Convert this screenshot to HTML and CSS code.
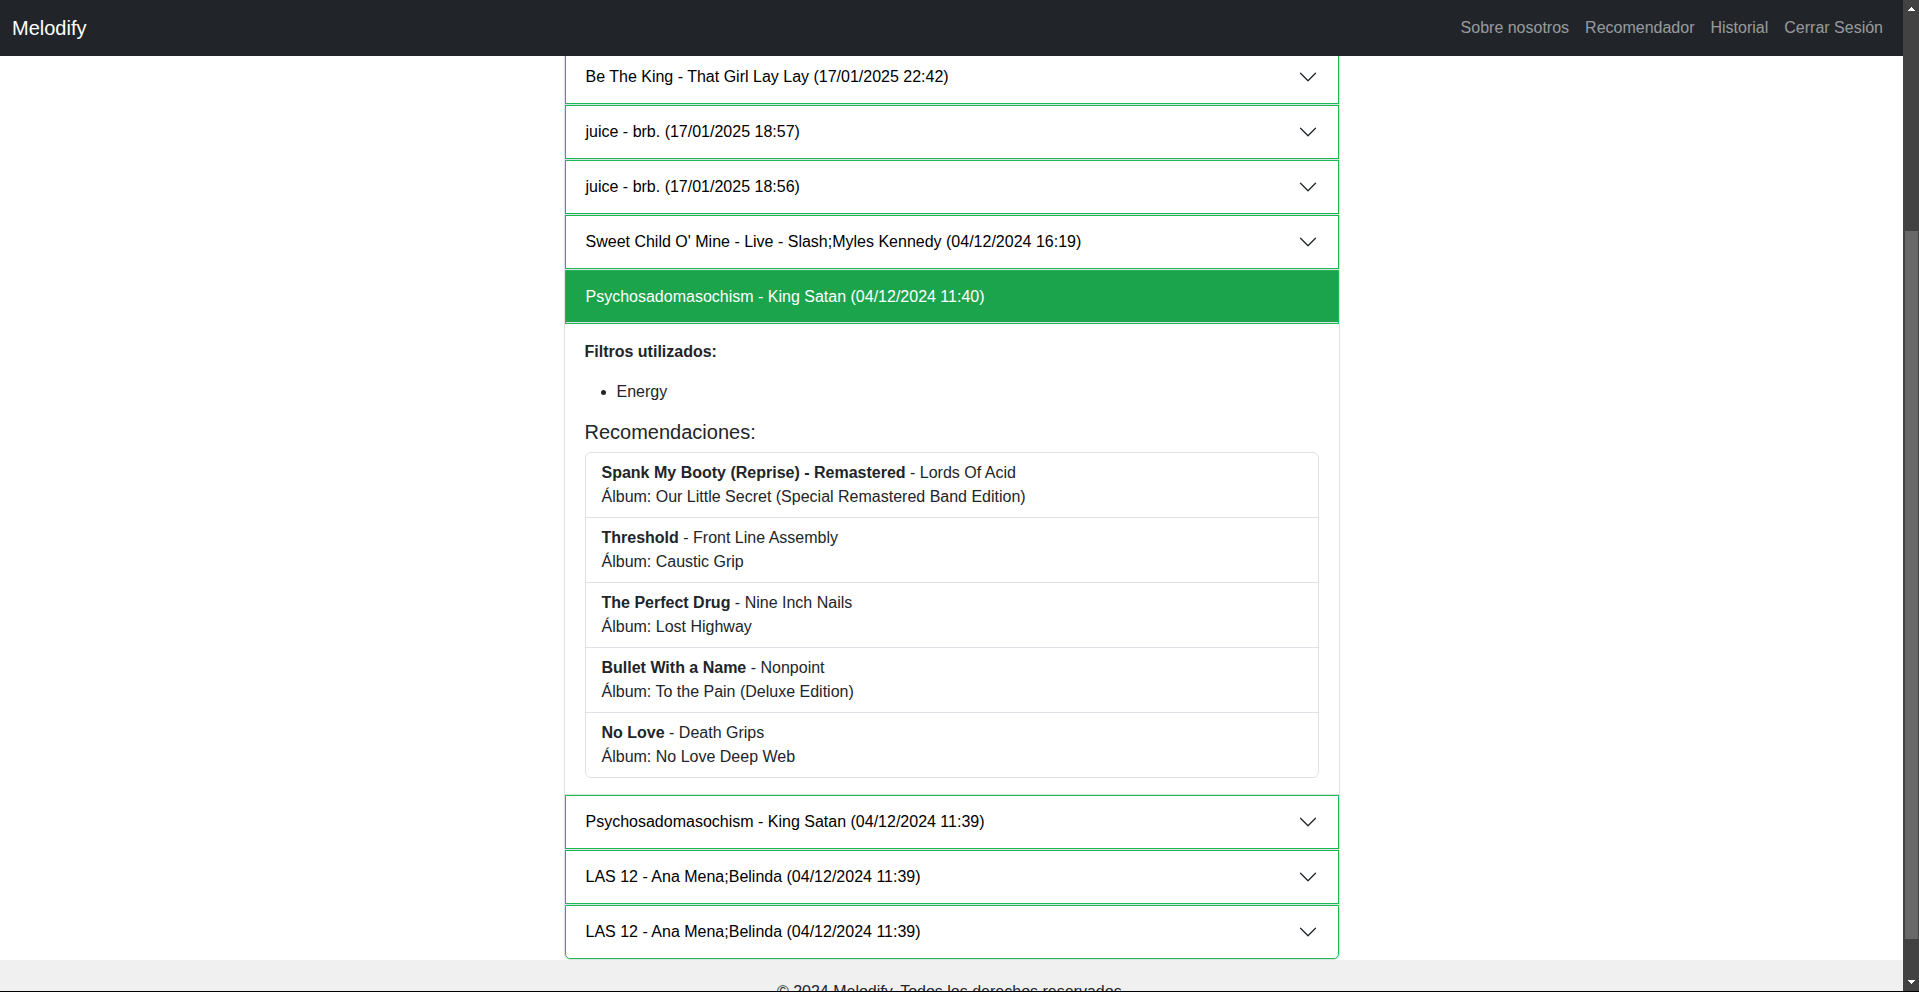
FILE: index.html
```html
<!DOCTYPE html>
<html lang="es">
<head>
<meta charset="utf-8">
<meta name="viewport" content="width=device-width, initial-scale=1">
<title>Melodify - Historial</title>
<link rel="stylesheet" href="styles.css">
</head>
<body>
<svg class="sprite" aria-hidden="true">
  <symbol id="chevron" viewBox="0 0 16 16">
    <path fill="none" stroke="currentColor" stroke-linecap="round" stroke-linejoin="round" d="m2 5 6 6 6-6"/>
  </symbol>
</svg>
<div class="page">
  <nav class="navbar">
    <a class="brand" href="#">Melodify</a>
    <div class="nav-links">
      <a class="nav-link" href="#">Sobre nosotros</a>
      <a class="nav-link" href="#">Recomendador</a>
      <a class="nav-link" href="#">Historial</a>
      <a class="nav-link" href="#">Cerrar Sesión</a>
    </div>
  </nav>
  <main class="container">
    <div class="accordion">
      <section class="item">
        <button class="item-button" type="button" aria-expanded="false"><span>Be The King - That Girl Lay Lay (17/01/2025 22:42)</span><svg class="chevron" aria-hidden="true"><use href="#chevron"/></svg></button>
      </section>
      <section class="item">
        <button class="item-button" type="button" aria-expanded="false"><span>juice - brb. (17/01/2025 18:57)</span><svg class="chevron" aria-hidden="true"><use href="#chevron"/></svg></button>
      </section>
      <section class="item">
        <button class="item-button" type="button" aria-expanded="false"><span>juice - brb. (17/01/2025 18:56)</span><svg class="chevron" aria-hidden="true"><use href="#chevron"/></svg></button>
      </section>
      <section class="item">
        <button class="item-button" type="button" aria-expanded="false"><span>Sweet Child O' Mine - Live - Slash;Myles Kennedy (04/12/2024 16:19)</span><svg class="chevron" aria-hidden="true"><use href="#chevron"/></svg></button>
      </section>
      <section class="item">
        <button class="item-button open" type="button" aria-expanded="true" aria-controls="detail"><span>Psychosadomasochism - King Satan (04/12/2024 11:40)</span></button>
        <div class="item-body" id="detail">
          <p class="filters-title"><strong>Filtros utilizados:</strong></p>
          <ul class="filters">
            <li>Energy</li>
          </ul>
          <h5 class="results-title">Recomendaciones:</h5>
          <ul class="results">
            <li class="result"><strong>Spank My Booty (Reprise) - Remastered</strong> - Lords Of Acid<br>Álbum: Our Little Secret (Special Remastered Band Edition)</li>
            <li class="result"><strong>Threshold</strong> - Front Line Assembly<br>Álbum: Caustic Grip</li>
            <li class="result"><strong>The Perfect Drug</strong> - Nine Inch Nails<br>Álbum: Lost Highway</li>
            <li class="result"><strong>Bullet With a Name</strong> - Nonpoint<br>Álbum: To the Pain (Deluxe Edition)</li>
            <li class="result"><strong>No Love</strong> - Death Grips<br>Álbum: No Love Deep Web</li>
          </ul>
        </div>
      </section>
      <section class="item">
        <button class="item-button" type="button" aria-expanded="false"><span>Psychosadomasochism - King Satan (04/12/2024 11:39)</span><svg class="chevron" aria-hidden="true"><use href="#chevron"/></svg></button>
      </section>
      <section class="item">
        <button class="item-button" type="button" aria-expanded="false"><span>LAS 12 - Ana Mena;Belinda (04/12/2024 11:39)</span><svg class="chevron" aria-hidden="true"><use href="#chevron"/></svg></button>
      </section>
      <section class="item">
        <button class="item-button" type="button" aria-expanded="false"><span>LAS 12 - Ana Mena;Belinda (04/12/2024 11:39)</span><svg class="chevron" aria-hidden="true"><use href="#chevron"/></svg></button>
      </section>
    </div>
  </main>
  <footer class="footer">© 2024 Melodify. Todos los derechos reservados.</footer>
</div>
<div class="scrollbar" aria-hidden="true">
  <svg class="arrow" viewBox="0 0 16 17" shape-rendering="crispEdges"><path fill="#fff" d="M8 7h1v1h1v1h1v1h1v1H5v-1h1V9h1V8h1z"/></svg>
  <div class="track">
    <div class="track-before"></div>
    <div class="thumb"></div>
    <div class="track-after"></div>
  </div>
  <svg class="arrow" viewBox="0 0 16 17" shape-rendering="crispEdges"><path fill="#fff" d="M5 6h7v1h-1v1h-1v1H9v1H8V9H7V8H6V7H5z"/></svg>
</div>
</body>
</html>
```

FILE: styles.css
```css
*,
*::before,
*::after {
  box-sizing: border-box;
}

body {
  display: flex;
  height: 100vh;
  margin: 0;
  overflow: hidden;
  border-bottom: 1px solid #000;
  background: #fff;
  color: #212529;
  font-family: "Liberation Sans", Arial, sans-serif;
  font-size: 16px;
  line-height: 24px;
}

.sprite {
  display: none;
}

.page {
  flex: 1;
  min-width: 0;
  overflow: hidden;
}

.navbar {
  position: sticky;
  top: 0;
  z-index: 10;
  display: flex;
  align-items: center;
  justify-content: space-between;
  padding: 8px 12px;
  background: #212529;
}

.brand {
  color: #fff;
  font-size: 20px;
  line-height: 30px;
  text-decoration: none;
}

.nav-links {
  display: flex;
}

.nav-link {
  padding: 8px;
  color: rgba(255, 255, 255, 0.55);
  text-decoration: none;
}

.container {
  max-width: 800px;
  margin: 0 auto;
  padding: 0 12px;
}

/* The list is scrolled slightly beneath the navbar */
.accordion {
  margin-top: -6px;
}

.item {
  border: 1px solid #dee2e6;
  border-top: 0;
}

.item-button {
  display: flex;
  align-items: center;
  justify-content: space-between;
  width: 100%;
  padding: 14px 20px;
  border: 1px solid #1db954;
  background: #fff;
  color: #000;
  font: inherit;
  text-align: left;
}

.item-button.open {
  background: #1ca44c;
  box-shadow: inset 0 -1px 0 #dee2e6;
  color: #fff;
}

.item:last-child {
  border-radius: 0 0 6px 6px;
}

.item:last-child .item-button {
  border-radius: 0 0 5px 5px;
}

.chevron {
  flex: none;
  width: 20px;
  height: 20px;
  color: #212529;
}

.item-body {
  padding: 16px 20px;
}

.filters-title {
  margin: 0 0 16px;
}

.filters {
  margin: 0 0 16px;
  padding-left: 32px;
}

.results-title {
  margin: 0 0 8px;
  font-size: 20px;
  font-weight: 500;
  line-height: 24px;
}

.results {
  margin: 0;
  padding: 0;
  border: 1px solid #dee2e6;
  border-radius: 6px;
  list-style: none;
}

.result {
  padding: 8px 16px;
}

.result + .result {
  border-top: 1px solid #dee2e6;
}

.footer {
  padding: 20px;
  background: #f0f0f0;
  text-align: center;
}

.scrollbar {
  display: flex;
  flex: none;
  flex-direction: column;
  width: 16px;
  background: #424242;
}

.arrow {
  flex: none;
  width: 16px;
  height: 17px;
}

.track {
  display: flex;
  flex: 1;
  flex-direction: column;
  padding: 0 1px 0 2px;
}

.track-before {
  flex: 214;
}

.thumb {
  flex: 708;
  background: #686868;
}

.track-after {
  flex: 35;
}
```
